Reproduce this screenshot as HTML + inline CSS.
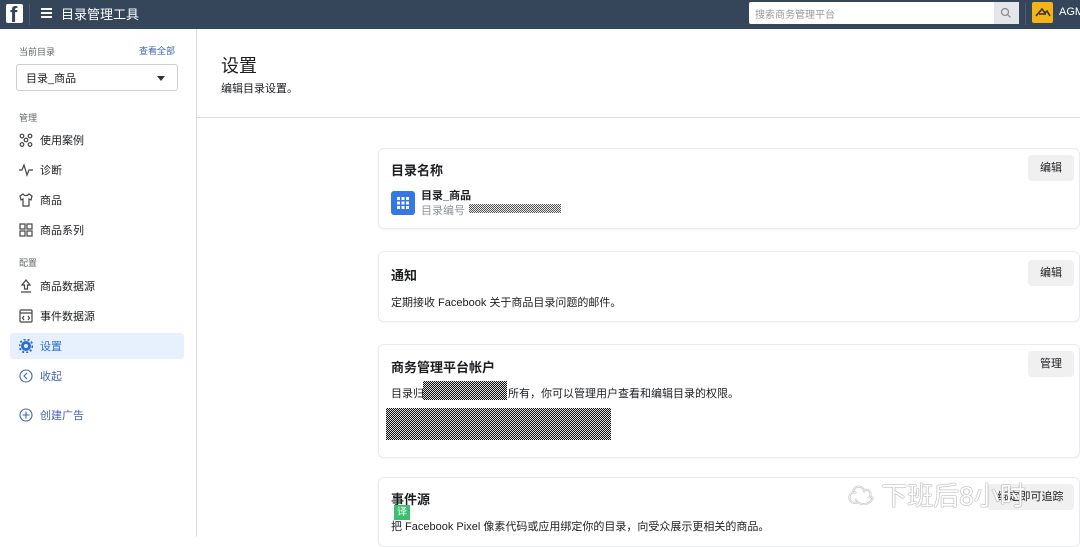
<!DOCTYPE html>
<html><head><meta charset="utf-8"><style>
*{box-sizing:border-box;margin:0;padding:0}
body{width:1080px;height:537px;overflow:hidden;background:#fff;font-family:"Liberation Sans","Noto Sans CJK SC",sans-serif;color:#1c1e21;position:relative}
.hdr{position:absolute;left:0;top:0;width:1080px;height:29px;background:#35465a}
.abs{position:absolute}
.side{position:absolute;left:0;top:29px;width:197px;height:508px;border-right:1px solid #dadde1;background:#fff}
.nav{position:absolute;left:19px;font-size:11px;color:#1c1e21;display:flex;align-items:center}
.nav svg{margin-right:7px}
.card{position:absolute;left:378px;width:702px;border:1px solid #e9ebee;border-radius:6px;background:#fff;box-shadow:0 1px 2px rgba(0,0,0,.04)}
.ct{position:absolute;left:12px;font-size:13px;font-weight:bold;color:#1c1e21}
.btn{position:absolute;left:649px;width:46px;height:26px;background:#f0f0f0;border-radius:4px;font-size:11px;text-align:center;line-height:26px;color:#1c1e21}
.txt{position:absolute;left:12px;font-size:11px;color:#1c1e21}
.noise{background:repeating-conic-gradient(#111 0 25%,#ddd 0 50%) 0 0/2px 2px}
</style></head><body>
<div class="hdr">
 <div class="abs" style="left:6px;top:4px;width:17px;height:19px;background:#fff;border-radius:2px"></div>
 <div class="abs" style="left:10px;top:2px;font-size:22px;font-weight:bold;color:#35465a;font-family:'Liberation Sans'">f</div>
 <div class="abs" style="left:29px;top:4px;width:1px;height:21px;background:#4e5d6e"></div>
 <div class="abs" style="left:41px;top:8px;width:11px;height:1.5px;background:#fff;box-shadow:0 4px 0 #fff,0 8px 0 #fff"></div>
 <div class="abs" style="left:61px;top:4px;font-size:13px;color:#fff">目录管理工具</div>
 <div class="abs" style="left:749px;top:2px;width:270px;height:22px;background:#fff;border-radius:2px"></div>
 <div class="abs" style="left:755px;top:6px;font-size:10px;color:#999">搜索商务管理平台</div>
 <div class="abs" style="left:994px;top:2px;width:25px;height:22px;background:#e4e6eb"></div>
 <svg class="abs" style="left:1000px;top:7px" width="12" height="12"><circle cx="5" cy="5" r="3.5" fill="none" stroke="#888" stroke-width="1.2"/><line x1="7.5" y1="7.5" x2="10.5" y2="10.5" stroke="#888" stroke-width="1.2"/></svg>
 <div class="abs" style="left:1025px;top:3px;width:1px;height:22px;background:#4e5d6e"></div>
 <div class="abs" style="left:1032px;top:2px;width:21px;height:21px;background:#f2b417;border-radius:2px"></div>
 <svg class="abs" style="left:1034px;top:5px" width="17" height="14"><path d="M2 11 L8 4 L11 8 L13 6 L16 11 M5 9 L12 9" fill="none" stroke="#333" stroke-width="1.5"/></svg>
 <div class="abs" style="left:1059px;top:6px;font-size:11px;color:#fff">AGM</div>
</div>
<div class="side">
 <div class="abs" style="left:19px;top:16px;font-size:9px;color:#606770">当前目录</div>
 <div class="abs" style="left:139px;top:15px;font-size:9px;color:#4267b2">查看全部</div>
 <div class="abs" style="left:16px;top:35px;width:162px;height:27px;border:1px solid #ccd0d5;border-radius:3px"></div>
 <div class="abs" style="left:26px;top:41px;font-size:11px">目录_商品</div>
 <div class="abs" style="left:157px;top:47px;width:0;height:0;border-left:4px solid transparent;border-right:4px solid transparent;border-top:5px solid #333"></div>
 <div class="abs" style="left:19px;top:82px;font-size:9px;color:#606770">管理</div>
 <div class="nav" style="top:103px"><svg width="14" height="14" fill="none" stroke="#444" stroke-width="1.2"><circle cx="3" cy="3" r="1.8"/><circle cx="11" cy="3" r="1.8"/><circle cx="7" cy="7" r="1.8"/><circle cx="3" cy="11.5" r="1.8"/><circle cx="11" cy="11.5" r="1.8"/></svg>使用案例</div>
 <div class="nav" style="top:133px"><svg width="14" height="14" fill="none" stroke="#444" stroke-width="1.2"><path d="M0 7h3l2-5 3 10 2-5h4"/></svg>诊断</div>
 <div class="nav" style="top:163px"><svg width="14" height="14" fill="none" stroke="#444" stroke-width="1.2"><path d="M4 1L1 3l1 4 2-1v7h6V6l2 1 1-4-3-2c-1 2-5 2-6 0z"/></svg>商品</div>
 <div class="nav" style="top:193px"><svg width="14" height="14" fill="none" stroke="#444" stroke-width="1.2"><rect x="1" y="1" width="5" height="5"/><rect x="8" y="1" width="5" height="5"/><rect x="1" y="8" width="5" height="5"/><rect x="8" y="8" width="5" height="5"/></svg>商品系列</div>
 <div class="abs" style="left:19px;top:227px;font-size:9px;color:#606770">配置</div>
 <div class="nav" style="top:249px"><svg width="14" height="14" fill="none" stroke="#444" stroke-width="1.2"><path d="M7 1L3 6h2.5v4h3V6H11z M2 13h10"/></svg>商品数据源</div>
 <div class="nav" style="top:279px"><svg width="14" height="14" fill="none" stroke="#444" stroke-width="1.2"><rect x="1" y="1" width="12" height="12" rx="1"/><path d="M1 4h12 M5 7l-1.5 2L5 11 M9 7l1.5 2L9 11"/></svg>事件数据源</div>
 <div class="abs" style="left:10px;top:304px;width:174px;height:26px;background:#e7f0fd;border-radius:3px"></div>
 <div class="nav" style="top:309px;color:#2d6fd2"><svg width="14" height="14"><circle cx="7" cy="7" r="5" fill="#2d6fd2"/><circle cx="7" cy="7" r="6.5" fill="none" stroke="#2d6fd2" stroke-width="2" stroke-dasharray="2 2"/><circle cx="7" cy="7" r="2" fill="#e7f0fd"/></svg>设置</div>
 <div class="nav" style="top:339px;color:#4267b2"><svg width="14" height="14" fill="none" stroke="#4267b2" stroke-width="1.1"><circle cx="7" cy="7" r="6"/><path d="M8 4L5 7l3 3"/></svg>收起</div>
 <div class="nav" style="top:378px;color:#4267b2"><svg width="14" height="14" fill="none" stroke="#4267b2" stroke-width="1.1"><circle cx="7" cy="7" r="6"/><path d="M7 3.5v7M3.5 7h7"/></svg>创建广告</div>
</div>
<div class="abs" style="left:221px;top:52px;font-size:18px">设置</div>
<div class="abs" style="left:221px;top:80px;font-size:11px">编辑目录设置。</div>
<div class="abs" style="left:197px;top:117px;width:883px;height:1px;background:#dadde1"></div>

<div class="card" style="top:148px;height:81px">
 <div class="ct" style="top:11px">目录名称</div>
 <div class="btn" style="top:6px">编辑</div>
 <div class="abs" style="left:12px;top:42px;width:24px;height:24px;background:#3578e5;border-radius:3px"></div>
 <svg class="abs" style="left:18px;top:48px" width="12" height="12" fill="#fff"><rect x="0" y="0" width="3" height="3"/><rect x="4.5" y="0" width="3" height="3"/><rect x="9" y="0" width="3" height="3"/><rect x="0" y="4.5" width="3" height="3"/><rect x="4.5" y="4.5" width="3" height="3"/><rect x="9" y="4.5" width="3" height="3"/><rect x="0" y="9" width="3" height="3"/><rect x="4.5" y="9" width="3" height="3"/><rect x="9" y="9" width="3" height="3"/></svg>
 <div class="abs" style="left:42px;top:38px;font-size:11px;font-weight:bold">目录_商品</div>
 <div class="abs" style="left:42px;top:53px;font-size:11px;color:#90949c">目录编号</div>
 <div class="abs noise" style="left:90px;top:55px;width:92px;height:9px;opacity:.7"></div>
</div>
<div class="card" style="top:251px;height:71px">
 <div class="ct" style="top:13px">通知</div>
 <div class="btn" style="top:8px">编辑</div>
 <div class="txt" style="top:42px">定期接收 Facebook 关于商品目录问题的邮件。</div>
</div>
<div class="card" style="top:344px;height:114px">
 <div class="ct" style="top:12px">商务管理平台帐户</div>
 <div class="btn" style="top:6px">管理</div>
 <div class="txt" style="top:40px">目录归<span style="display:inline-block;width:84px"></span>所有，你可以管理用户查看和编辑目录的权限。</div>
 <div class="abs noise" style="left:44px;top:36px;width:84px;height:19px"></div>
 <div class="abs noise" style="left:7px;top:63px;width:225px;height:32px"></div>
</div>
<div class="card" style="top:477px;height:70px">
 <div class="ct" style="top:11px">事件源</div>
 <div class="btn" style="left:608px;top:6px;width:87px">绑定即可追踪</div>
 <div class="abs" style="left:15px;top:27px;width:16px;height:15px;background:#3cbf6e;color:#fff;font-size:10px;text-align:center;line-height:15px">译</div>
 <div class="txt" style="top:40px">把 Facebook Pixel 像素代码或应用绑定你的目录，向受众展示更相关的商品。</div>
</div>
<div class="abs" style="left:848px;top:476px;font-size:26px;color:#fff;text-shadow:0 0 1px #777,0 0 1px #777">&#x2601; 下班后8小时</div>
</body></html>
